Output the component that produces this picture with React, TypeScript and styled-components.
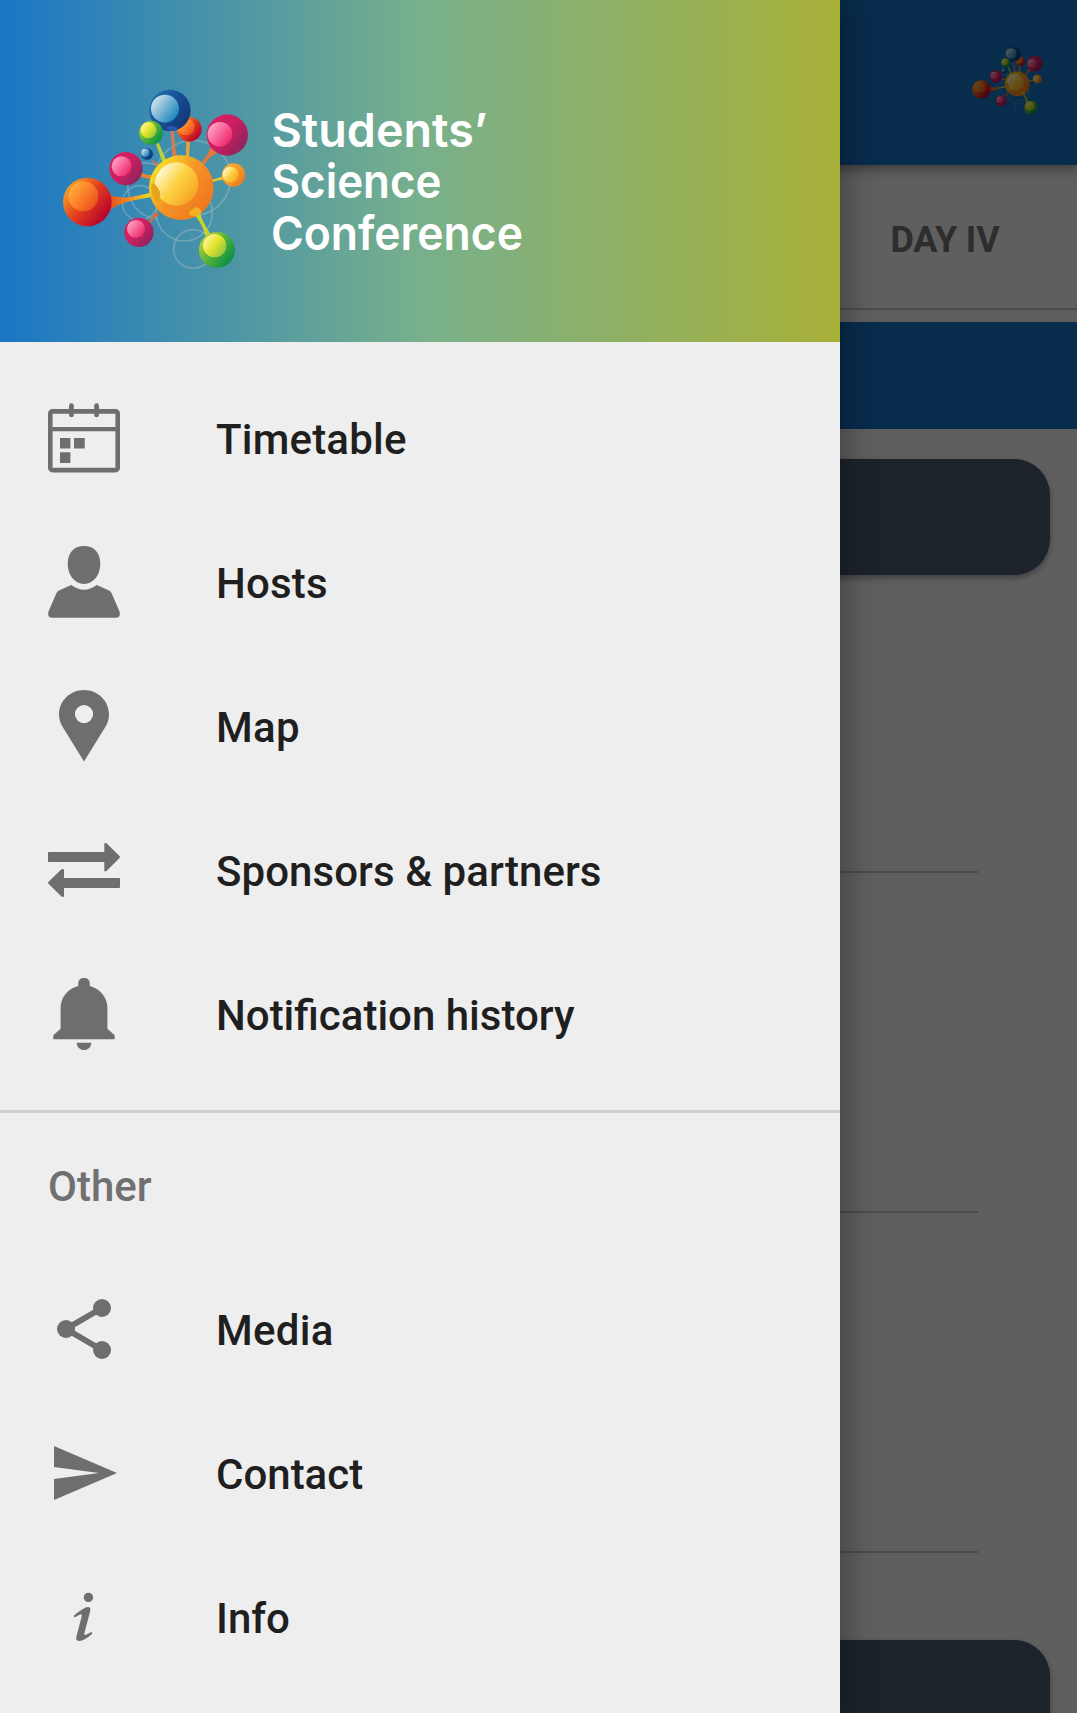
import React, { useId } from "react";
import styled, { createGlobalStyle } from "styled-components";

const GlobalStyle = createGlobalStyle`
  html, body { margin: 0; padding: 0; }
  body { overflow: hidden; font-family: Roboto, "Liberation Sans", sans-serif; }
  * { box-sizing: border-box; }
`;

const Screen = styled.div`
  position: relative;
  width: 1077px;
  height: 1713px;
  overflow: hidden;
  background: #eeeeee;
`;

const Page = styled.main`
  display: flex;
  flex-direction: column;
  height: 100%;
`;

const AppBar = styled.header`
  display: flex;
  flex: none;
  justify-content: flex-end;
  height: 165px;
  padding: 45.5px 34px 0 0;
  background: #146fbe;
  box-shadow: 0 3px 12px rgba(0, 0, 0, 0.45);
  z-index: 1;
`;

const TabStrip = styled.nav`
  display: flex;
  flex: none;
  justify-content: flex-end;
  height: 145px;
  border-bottom: 2px solid #bebebe;
`;

const Tab = styled.div`
  display: flex;
  align-items: center;
  justify-content: center;
  width: 264px;
  padding-top: 7px;
  font-size: 36px;
  font-weight: 700;
  letter-spacing: -0.2px;
  color: #707070;
`;

const DayBanner = styled.div`
  flex: none;
  height: 107px;
  margin-top: 12px;
  background: #146fbe;
`;

const Schedule = styled.section`
  display: flex;
  flex: none;
  flex-direction: column;
  padding: 30px 27px 0;
`;

const SessionCard = styled.div`
  flex: none;
  height: 116px;
  border-radius: 36px;
  background: #465869;
  box-shadow: 0 3px 6px rgba(0, 0, 0, 0.35);
`;

const Slot = styled.div<{ $height: number }>`
  flex: none;
  height: ${(p) => p.$height}px;
  margin-right: 72px;
  border-bottom: 2px solid #bebebe;
`;

const SlotGap = styled.div`
  flex: none;
  height: 87px;
`;

const Scrim = styled.div`
  position: absolute;
  inset: 0;
  z-index: 2;
  background: rgba(0, 0, 0, 0.6);
`;

const Drawer = styled.aside`
  position: absolute;
  inset: 0 auto 0 0;
  z-index: 3;
  display: flex;
  flex-direction: column;
  width: 840px;
  background: #eeeeee;
  box-shadow: 0 0 36px rgba(0, 0, 0, 0.42);
`;

const DrawerHeader = styled.div`
  display: flex;
  flex: none;
  align-items: flex-start;
  gap: 22px;
  height: 342px;
  padding: 89px 0 0 63px;
  background: linear-gradient(90deg, #1976c5 0%, #78b08c 50%, #a8b038 100%);
`;

const Wordmark = styled.svg`
  display: block;
  width: 270px;
  height: 190px;
  overflow: visible;
  font-family: Inter, "Open Sans", sans-serif;
  font-size: 47px;
  font-weight: 600;
  fill: #ffffff;
`;

const Menu = styled.ul`
  display: flex;
  flex: none;
  flex-direction: column;
  margin: 0;
  padding: 0;
  list-style: none;
`;

const MainMenu = styled(Menu)`
  padding: 24px 0;
  border-bottom: 3px solid #d0d0d0;
`;

const MenuItem = styled.li`
  display: flex;
  align-items: center;
  gap: 96px;
  height: 144px;
  padding-left: 48px;
`;

const MenuLabel = styled.span<{ $tracking?: number }>`
  padding-top: 3px;
  font-size: 42px;
  font-weight: 500;
  line-height: 50px;
  letter-spacing: ${(p) => (p.$tracking ? `${p.$tracking}px` : "normal")};
  color: #1f1f1f;
`;

const SectionTitle = styled.h2`
  display: flex;
  flex: none;
  align-items: center;
  height: 144px;
  margin: 0;
  padding: 3px 0 0 48px;
  font-size: 42px;
  font-weight: 500;
  color: #707070;
`;

const Glyph = styled.svg.attrs({ viewBox: "0 0 72 72" })`
  display: block;
  flex: none;
  width: 72px;
  height: 72px;
  fill: #6e6e6e;
`;

const MoleculeSvg = styled.svg<{ $width: number }>`
  display: block;
  flex: none;
  width: ${(p) => p.$width}px;
  height: ${(p) => (p.$width * 540) / 556}px;
`;

type Ball = {
  x: number;
  y: number;
  r: number;
  tone: string;
  hx: number;
  hy: number;
  hr: number;
  shine: string;
};

const balls: Ball[] = [
  { x: 447, y: 179, r: 37, tone: "red", hx: 438, hy: 172, hr: 25, shine: "orangeShine" },
  { x: 389, y: 122, r: 62, tone: "blue", hx: 374, hy: 117, hr: 42, shine: "blueShine" },
  { x: 332, y: 189, r: 36, tone: "green", hx: 325, hy: 182, hr: 24, shine: "limeShine" },
  { x: 561, y: 196, r: 62, tone: "pink", hx: 539, hy: 194, hr: 37, shine: "pinkShine" },
  { x: 320, y: 253, r: 18, tone: "blue", hx: 315, hy: 249, hr: 12, shine: "blueShine" },
  { x: 257, y: 297, r: 50, tone: "pink", hx: 244, hy: 290, hr: 30, shine: "pinkShine" },
  { x: 580, y: 316, r: 35, tone: "amber", hx: 571, hy: 315, hr: 24, shine: "goldShine" },
  { x: 141, y: 397, r: 73, tone: "red", hx: 129, hy: 380, hr: 45, shine: "orangeShine" },
  { x: 296, y: 488, r: 44, tone: "pink", hx: 287, hy: 478, hr: 27, shine: "pinkShine" },
  { x: 530, y: 541, r: 54, tone: "green", hx: 523, hy: 528, hr: 35, shine: "limeShine" },
  { x: 423, y: 354, r: 97, tone: "core", hx: 409, hy: 343, hr: 65, shine: "goldShine" },
];

const tones: Record<string, [string, string, string]> = {
  red: ["#f3a427", "#e5401f", "#b4002b"],
  blue: ["#1f6fae", "#164f93", "#123778"],
  green: ["#b4d334", "#55b13c", "#078f43"],
  pink: ["#d81f63", "#cb1f61", "#8e235c"],
  amber: ["#f9b233", "#f59a27", "#ee7a22"],
  core: ["#f4e524", "#f59427", "#f0761f"],
  orangeShine: ["#ffb13c", "#fb8129", "#ed4e20"],
  blueShine: ["#d5e6f0", "#79b5d4", "#1685bd"],
  limeShine: ["#fff7a0", "#e5e52d", "#8fc63e"],
  pinkShine: ["#ffa5c5", "#f7669a", "#ee2467"],
  goldShine: ["#fffbe0", "#fcd345", "#f6a324"],
};

function Molecule({ width }: { width: number }) {
  const id = useId().replace(/[^a-zA-Z0-9]/g, "");
  const paint = (name: string) => `url(#${id}${name})`;
  return (
    <MoleculeSvg $width={width} viewBox="68 58 556 540">
      <defs>
        {Object.entries(tones).map(([name, [a, b, c]]) => (
          <linearGradient key={name} id={id + name} x1="0.08" y1="0.15" x2="0.92" y2="0.8">
            <stop offset="0" stopColor={a} />
            <stop offset="0.48" stopColor={b} />
            <stop offset="1" stopColor={c} />
          </linearGradient>
        ))}
        <linearGradient id={id + "arm"} x1="0" x2="1" y1="0" y2="0">
          <stop offset="0" stopColor="#e8501f" />
          <stop offset="0.45" stopColor="#f18a20" />
          <stop offset="1" stopColor="#e5e020" />
        </linearGradient>
      </defs>
      <g fill="none" stroke="#b9c6c8" strokeOpacity="0.38" strokeWidth="5">
        <circle cx="458" cy="325" r="113" />
        <circle cx="432" cy="430" r="84" />
        <circle cx="458" cy="538" r="58" />
        <circle cx="298" cy="400" r="52" />
        <path d="M262 345C262 400 300 445 350 447M300 282Q320 276 345 286" />
      </g>
      <path d="M208 374Q226 387 268 383L332 369V382L270 394Q232 403 208 422Z" fill={paint("arm")} />
      <path d="M390 180H401Q402 235 413 265H396Q396 225 390 180Z" fill="#d57d52" />
      <path d="M438 213H449L446 266H437Z" fill="#efa33b" />
      <path d="M347 223L355 219L380 276L367 280Z" fill="#b8d337" />
      <path d="M330 267L360 289L353 297Z" fill="#df7948" />
      <path d="M303 309Q318 318 336 316V329Q318 326 299 321Z" fill="#e98332" />
      <path d="M511 231L531 250Q508 258 493 284L484 277Q505 255 511 231Z" fill="#e87639" />
      <path d="M512 330Q532 328 549 318V330Q533 330 515 338Z" fill="#e9c62d" />
      <path d="M323 462Q334 444 344 426L358 435Q338 442 331 464Z" fill="#d96a3c" />
      {balls.map((b, i) => (
        <React.Fragment key={i}>
          <circle cx={b.x} cy={b.y} r={b.r} fill={paint(b.tone)} />
          <circle cx={b.hx} cy={b.hy} r={b.hr} fill={paint(b.shine)} />
        </React.Fragment>
      ))}
      <path d="M376 176Q394 160 412 176Q405 186 389 184Z" fill="#2956b5" />
      <path d="M334 341Q347 340 358 365Q364 390 350 398Q330 381 334 341Z" fill="#e5a51a" />
      <path d="M466 440L480 432Q487 456 509 491L496 500Q485 462 466 440Z" fill="#c8d42c" />
      <path d="M445 436Q448 417 471 412Q486 420 482 432L466 440Z" fill="#f4ae22" />
    </MoleculeSvg>
  );
}

const CalendarIcon = () => (
  <Glyph>
    <path
      fillRule="evenodd"
      d="M4.500 7H67.500A4.500 4.500 0 0 1 72 11.500V66A4.500 4.500 0 0 1 67.500 70.400H4.500A4.500 4.500 0 0 1 0 66V11.500A4.500 4.500 0 0 1 4.500 7ZM4.600 11.700V25H67.400V11.700ZM4.600 29.300V65.700H67.400V29.300Z"
    />
    <rect x="21" y="1.300" width="4.800" height="14" rx="2.400" />
    <rect x="46.200" y="1.300" width="4.800" height="14" rx="2.400" />
    <path d="M12 36H22.400V46.600H12ZM26 36H36.700V46.600H26ZM12 50.300H22.400V61H12Z" />
  </Glyph>
);

const PersonIcon = () => (
  <Glyph>
    <path d="M36 0C46.500 0 52.300 7 52.300 18C52.300 29 45 38 36 38S19.700 29 19.700 18C19.700 7 25.500 0 36 0Z" />
    <path d="M23.300 39Q36 48.400 48.700 39L61 44.600Q62.800 45.500 63.500 47L71.500 65.500Q73 71.700 68 71.700H4Q-1 71.700 0.500 65.500L8.500 47Q9.200 45.500 11 44.600Z" />
  </Glyph>
);

const PinIcon = () => (
  <Glyph>
    <path
      fillRule="evenodd"
      d="M36 0C50 0 61 11 61 24.500C61 29.500 59.500 33.500 57 37.500L36 71.400L15 37.500C12.500 33.500 11 29.500 11 24.500C11 11 22 0 36 0ZM36 15A9.100 9.100 0 1 0 36 33.200A9.100 9.100 0 1 0 36 15Z"
    />
  </Glyph>
);

const SwapIcon = () => (
  <Glyph>
    <path d="M1 18H56.300V10Q56.300 8.600 58.500 9.300L71.500 22Q72.500 23 71.500 24L58.500 37Q56.300 38 56.300 36.500V28H1Q0 28 0 27V19Q0 18 1 18Z" />
    <path d="M71 44H16V36Q16 34.300 13.500 35.200L.500 47.700Q-.500 48.800 .500 49.800L13.500 62.500Q16 63.500 16 62V54H71Q72 54 72 53V45Q72 44 71 44Z" />
  </Glyph>
);

const BellIcon = () => (
  <Glyph>
    <path d="M30.200 8V5.800C30.200 2 32.500 0 36 0S41.800 2 41.800 5.800V8C52 10.800 59.400 19 59.400 30V50.700L66.700 57.300V61.300H5.300V57.300L12.600 50.700V30C12.600 19 20 10.800 30.200 8Z" />
    <path d="M28.700 64.700H43.300C43.300 69 40 72 36 72S28.700 69 28.700 64.700Z" />
  </Glyph>
);

const ShareIcon = () => (
  <Glyph>
    <path d="M54 15L18 36L54 57" fill="none" stroke="#6e6e6e" strokeWidth="6" />
    <circle cx="54" cy="15" r="9" />
    <circle cx="18" cy="36" r="9" />
    <circle cx="54" cy="57" r="9" />
  </Glyph>
);

const SendIcon = () => (
  <Glyph>
    <path d="M6 63L69 36L6 9V30L51 36L6 42Z" />
  </Glyph>
);

const InfoIcon = () => (
  <Glyph>
    <circle cx="40.400" cy="16.400" r="4.700" />
    <path d="M26 34.600Q36 26 40 26Q43 26.200 42.200 30L36.300 52.500Q36 55 38.500 53.500L43.500 51Q45 51.500 44 53Q36 60 31.500 60Q27.500 60 28.300 56L33.500 36Q34.500 32.500 32 33.500L27 36.200Q25.500 35.800 26 34.600Z" />
  </Glyph>
);

const mainItems = [
  { label: "Timetable", Icon: CalendarIcon, tracking: 0.2 },
  { label: "Hosts", Icon: PersonIcon, tracking: 0.2 },
  { label: "Map", Icon: PinIcon, tracking: 0.3 },
  { label: "Sponsors & partners", Icon: SwapIcon, tracking: 0.06 },
  { label: "Notification history", Icon: BellIcon },
];

const otherItems = [
  { label: "Media", Icon: ShareIcon, tracking: 0.3 },
  { label: "Contact", Icon: SendIcon },
  { label: "Info", Icon: InfoIcon },
];

export default function App() {
  return (
    <>
      <GlobalStyle />
      <Screen>
        <Page>
          <AppBar>
            <Molecule width={71} />
          </AppBar>
          <TabStrip>
            <Tab>DAY IV</Tab>
          </TabStrip>
          <DayBanner />
          <Schedule>
            <SessionCard />
            <Slot $height={298} />
            <Slot $height={340} />
            <Slot $height={340} />
            <SlotGap />
            <SessionCard />
          </Schedule>
        </Page>
        <Scrim />
        <Drawer>
          <DrawerHeader>
            <Molecule width={185.300} />
            <Wordmark viewBox="0 0 270 190">
              <text x="1.500" y="57.500" textLength="216" lengthAdjust="spacingAndGlyphs">Students’</text>
              <text x="1.500" y="109" textLength="170" lengthAdjust="spacingAndGlyphs">Science</text>
              <text x="1" y="160.700" textLength="252" lengthAdjust="spacingAndGlyphs">Conference</text>
            </Wordmark>
          </DrawerHeader>
          <MainMenu>
            {mainItems.map(({ label, Icon, tracking }) => (
              <MenuItem key={label}>
                <Icon />
                <MenuLabel $tracking={tracking}>{label}</MenuLabel>
              </MenuItem>
            ))}
          </MainMenu>
          <SectionTitle>Other</SectionTitle>
          <Menu>
            {otherItems.map(({ label, Icon, tracking }) => (
              <MenuItem key={label}>
                <Icon />
                <MenuLabel $tracking={tracking}>{label}</MenuLabel>
              </MenuItem>
            ))}
          </Menu>
        </Drawer>
      </Screen>
    </>
  );
}
